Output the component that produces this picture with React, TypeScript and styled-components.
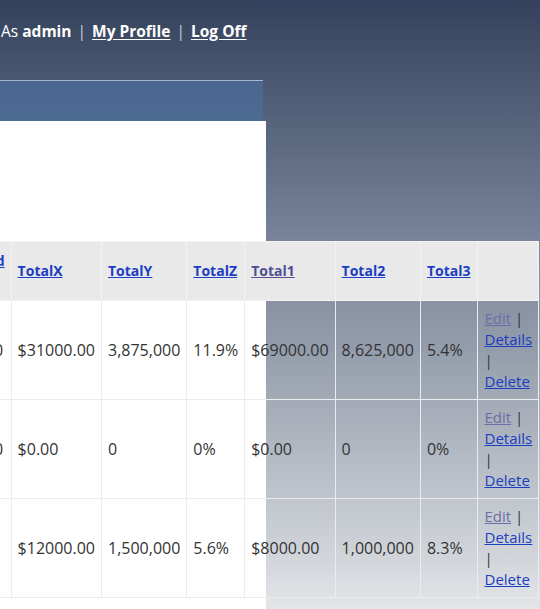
import React from "react";
import styled, { createGlobalStyle } from "styled-components";

const GlobalStyle = createGlobalStyle`
  html, body {
    margin: 0;
    padding: 0;
  }
  body {
    width: 540px;
    height: 609px;
    overflow: hidden;
    font-family: "Open Sans", "Noto Sans", sans-serif;
    background: linear-gradient(
      to bottom,
      #33415c 0px,
      #55637b 120px,
      #79849a 240px,
      #949dab 350px,
      #b5bbc4 460px,
      #d2d6db 560px,
      #e3e5e8 609px
    );
  }
`;

const Page = styled.div`
  display: flex;
  flex-direction: column;
  width: 540px;
  height: 609px;
`;

const LoginBar = styled.div`
  height: 80px;
  box-sizing: border-box;
  padding: 20px 0 0 1px;
  color: #ffffff;
  font-size: 15.5px;
  line-height: 22px;
  white-space: nowrap;
`;

const Bold = styled.b`
  font-weight: 700;
`;

const Sep = styled.span`
  color: #c9ced8;
  margin: 0 6px;
`;

const HeadLink = styled.a`
  color: #ffffff;
  font-weight: 700;
  text-decoration: underline;
  text-underline-offset: 2px;
`;

const MenuBar = styled.div`
  width: 263px;
  height: 40px;
  border-top: 1px solid #a8b7cb;
  background: linear-gradient(to bottom, #4a6690, #4e6b94);
`;

const Main = styled.div`
  flex: 1;
  width: 266px;
  background: #ffffff;
  padding-top: 120px;
  box-sizing: border-box;
`;

const Table = styled.table`
  border-collapse: collapse;
  margin-left: -72px;
  color: #333333;
  font-size: 16px;
`;

const Th = styled.th`
  background: #e9e9ea;
  border: 1px solid #f3f3f4;
  padding: 9px 6px;
  text-align: left;
  vertical-align: middle;
  white-space: nowrap;
  line-height: 20px;
  font-size: 14px;
`;

const SortLink = styled.a<{ $visited?: boolean }>`
  color: ${(p) => (p.$visited ? "#4f4f92" : "#1c3ec2")};
  font-weight: 700;
  text-decoration: underline;
`;

const Td = styled.td`
  border: 1px solid #ececee;
  padding: 7px 6px;
  vertical-align: middle;
  line-height: 21px;
  white-space: nowrap;
`;

const ActionTd = styled.td`
  border: 1px solid #ececee;
  padding: 7px 6px 7px 7px;
  vertical-align: middle;
  line-height: 21px;
  font-size: 15px;
`;

const ActionLink = styled.a<{ $visited?: boolean }>`
  color: ${(p) => (p.$visited ? "#6e6ea6" : "#1c3ec2")};
  text-decoration: underline;
`;

const headers: { lines: string[]; visited?: boolean }[] = [
  { lines: ["Total Paid", "Amount"] },
  { lines: ["TotalX"] },
  { lines: ["TotalY"] },
  { lines: ["TotalZ"] },
  { lines: ["Total1"], visited: true },
  { lines: ["Total2"] },
  { lines: ["Total3"] },
];

const rows: string[][] = [
  ["$4100.00", "$31000.00", "3,875,000", "11.9%", "$69000.00", "8,625,000", "5.4%"],
  ["$2500.00", "$0.00", "0", "0%", "$0.00", "0", "0%"],
  ["$800.00", "$12000.00", "1,500,000", "5.6%", "$8000.00", "1,000,000", "8.3%"],
];

export default function App() {
  return (
    <>
      <GlobalStyle />
      <Page>
        <LoginBar>
          As <Bold>admin</Bold>
          <Sep>|</Sep>
          <HeadLink href="#">My Profile</HeadLink>
          <Sep>|</Sep>
          <HeadLink href="#">Log Off</HeadLink>
        </LoginBar>
        <MenuBar />
        <Main>
          <Table>
            <thead>
              <tr>
                {headers.map((h, i) => (
                  <Th key={i}>
                    <SortLink href="#" $visited={h.visited}>
                      {h.lines.map((l, j) => (
                        <React.Fragment key={j}>
                          {j > 0 && <br />}
                          {l}
                        </React.Fragment>
                      ))}
                    </SortLink>
                  </Th>
                ))}
                <Th />
              </tr>
            </thead>
            <tbody>
              {rows.map((r, i) => (
                <tr key={i}>
                  {r.map((c, j) => (
                    <Td key={j}>{c}</Td>
                  ))}
                  <ActionTd>
                    <ActionLink href="#" $visited>
                      Edit
                    </ActionLink>{" "}
                    | <ActionLink href="#">Details</ActionLink> |{" "}
                    <ActionLink href="#">Delete</ActionLink>
                  </ActionTd>
                </tr>
              ))}
            </tbody>
          </Table>
        </Main>
      </Page>
    </>
  );
}
